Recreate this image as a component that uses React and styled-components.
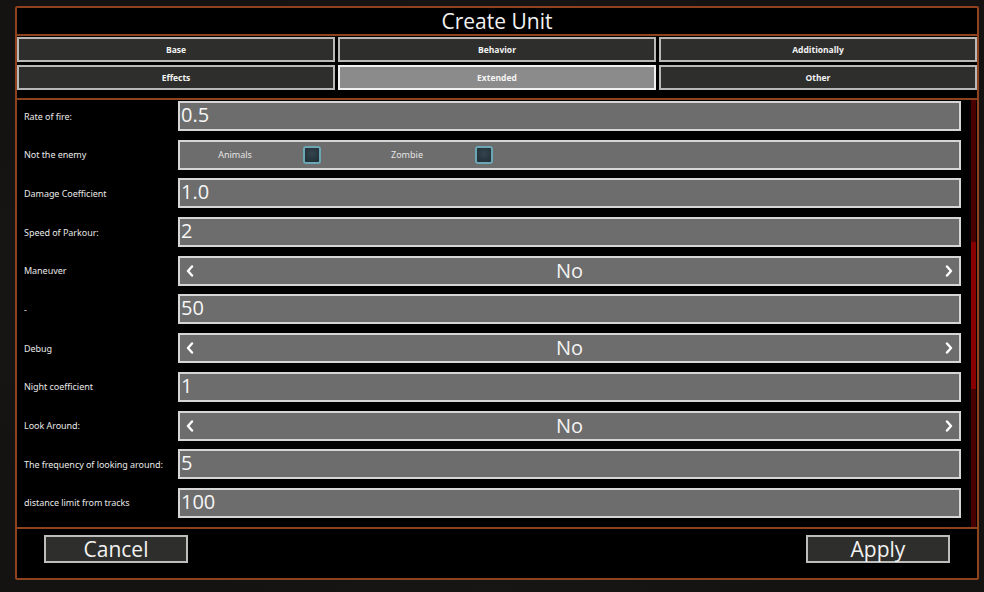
import React, { useState } from "react";
import styled, { createGlobalStyle } from "styled-components";

const GlobalStyle = createGlobalStyle`
  html, body {
    margin: 0;
    padding: 0;
    background: #1a1917;
    font-family: "Open Sans", "Noto Sans", sans-serif;
  }
  #root {
    width: 984px;
    height: 592px;
    overflow: hidden;
    background: radial-gradient(ellipse at 50% 50%, #262421 0%, #141312 80%);
  }
`;

const Panel = styled.div`
  margin: 6px 0 0 15px;
  width: 964px;
  height: 574px;
  box-sizing: border-box;
  border: 2px solid #8e421e;
  border-radius: 2px;
  background: #000;
  display: flex;
  flex-direction: column;
`;

const Title = styled.div`
  height: 26px;
  flex-shrink: 0;
  line-height: 26px;
  text-align: center;
  color: #f2f2f2;
  font-size: 21px;
  border-bottom: 2px solid #8e421e;
`;

const Tabs = styled.div`
  display: grid;
  flex-shrink: 0;
  grid-template-columns: 1fr 1fr 1fr;
  gap: 3px 3px;
  padding: 1px 0 8px 0;
  border-bottom: 2px solid #8e421e;
`;

const Tab = styled.button`
  height: 25px;
  box-sizing: border-box;
  border: 2px solid ${(p) => (p.$active ? "#f0f0f0" : "#b8b8b6")};
  background: ${(p) => (p.$active ? "#8b8b8b" : "#2e2f2c")};
  color: #f4f4f4;
  font-family: "Open Sans", sans-serif;
  font-weight: 700;
  font-size: 8.5px;
  padding: 0;
  cursor: pointer;
`;

const Content = styled.div`
  height: 427px;
  flex-shrink: 0;
  display: flex;
  overflow: hidden;
  border-bottom: 2px solid #8e421e;
`;

const Rows = styled.div`
  flex: 1;
  display: flex;
  flex-direction: column;
  gap: 8.7px;
  padding: 1px 0 0 0;
`;

const Row = styled.div`
  display: flex;
  align-items: center;
  height: 30px;
  flex-shrink: 0;
`;

const Label = styled.div`
  width: 154px;
  padding-left: 7px;
  flex-shrink: 0;
  color: #e8e8e8;
  font-family: "Noto Sans", sans-serif;
  font-size: 9px;
  letter-spacing: -0.05px;
`;

const Field = styled.div`
  width: 783px;
  height: 30px;
  box-sizing: border-box;
  border: 2px solid #d6d6d6;
  background: #6d6d6d;
  display: flex;
  align-items: center;
`;

const Value = styled.span`
  color: #f6f6f6;
  font-size: 20px;
  padding-left: 1px;
  line-height: 24px;
  margin-top: -2px;
`;

const SelectText = styled.span`
  flex: 1;
  text-align: center;
  color: #f4f4f4;
  font-size: 20px;
  line-height: 26px;
`;

const Arrow = styled.span`
  width: 20px;
  display: flex;
  justify-content: center;
  align-items: center;
`;

const Option = styled.div`
  width: 172px;
  display: flex;
  align-items: center;
`;

const OptionText = styled.span`
  width: 110px;
  text-align: center;
  color: #e4e4e4;
  font-family: "Noto Sans", sans-serif;
  font-size: 9px;
  margin-right: 13px;
`;

const Check = styled.span`
  width: 18px;
  height: 18px;
  box-sizing: border-box;
  border: 2px solid #6ba6b4;
  border-radius: 3px;
  background: radial-gradient(circle at 50% 40%, #34454f 0%, #1e2a31 100%);
`;

const Scroll = styled.div`
  width: 6px;
  margin: 0 1px 0 10px;
  display: flex;
  flex-direction: column;
  background: #480000;
`;

const Thumb = styled.div`
  margin-top: 142px;
  height: 147px;
  background: #880000;
`;

const Footer = styled.div`
  flex: 1;
  display: flex;
  justify-content: space-between;
  align-items: flex-start;
  padding: 6px 27px 0 27px;
  background: rgba(0, 0, 0, 0.92);
`;

const Button = styled.button`
  width: 144px;
  height: 28px;
  box-sizing: border-box;
  border: 2px solid #bdbdbb;
  background: #2e2f2c;
  color: #f2f2f2;
  font-family: "Open Sans", sans-serif;
  font-size: 21px;
  line-height: 22px;
  padding: 0;
  cursor: pointer;
`;

const Chevron = ({ dir }) => (
  <svg width="8" height="12" viewBox="0 0 8 12">
    <polyline
      points={dir === "left" ? "6,1.5 2,6 6,10.5" : "2,1.5 6,6 2,10.5"}
      fill="none"
      stroke="#fff"
      strokeWidth="2.4"
      strokeLinecap="round"
      strokeLinejoin="round"
    />
  </svg>
);

const tabs = ["Base", "Behavior", "Additionally", "Effects", "Extended", "Other"];

const rows = [
  { label: "Rate of fire:", type: "value", value: "0.5" },
  { label: "Not the enemy", type: "checks", options: ["Animals", "Zombie"] },
  { label: "Damage Coefficient", type: "value", value: "1.0" },
  { label: "Speed of Parkour:", type: "value", value: "2" },
  { label: "Maneuver", type: "select", value: "No" },
  { label: "-", type: "value", value: "50" },
  { label: "Debug", type: "select", value: "No" },
  { label: "Night coefficient", type: "value", value: "1" },
  { label: "Look Around:", type: "select", value: "No" },
  { label: "The frequency of looking around:", type: "value", value: "5" },
  { label: "distance limit from tracks", type: "value", value: "100" },
];

const App = () => {
  const [active, setActive] = useState("Extended");

  return (
    <>
      <GlobalStyle />
      <Panel>
        <Title>Create Unit</Title>
        <Tabs>
          {tabs.map((t) => (
            <Tab key={t} $active={active === t} onClick={() => setActive(t)}>
              {t}
            </Tab>
          ))}
        </Tabs>
        <Content>
          <Rows>
            {rows.map((r) => (
              <Row key={r.label}>
                <Label>{r.label}</Label>
                <Field>
                  {r.type === "value" && <Value>{r.value}</Value>}
                  {r.type === "select" && (
                    <>
                      <Arrow><Chevron dir="left" /></Arrow>
                      <SelectText>{r.value}</SelectText>
                      <Arrow><Chevron dir="right" /></Arrow>
                    </>
                  )}
                  {r.type === "checks" &&
                    r.options.map((o) => (
                      <Option key={o}>
                        <OptionText>{o}</OptionText>
                        <Check />
                      </Option>
                    ))}
                </Field>
              </Row>
            ))}
          </Rows>
          <Scroll>
            <Thumb />
          </Scroll>
        </Content>
        <Footer>
          <Button>Cancel</Button>
          <Button>Apply</Button>
        </Footer>
      </Panel>
    </>
  );
};

export default App;
